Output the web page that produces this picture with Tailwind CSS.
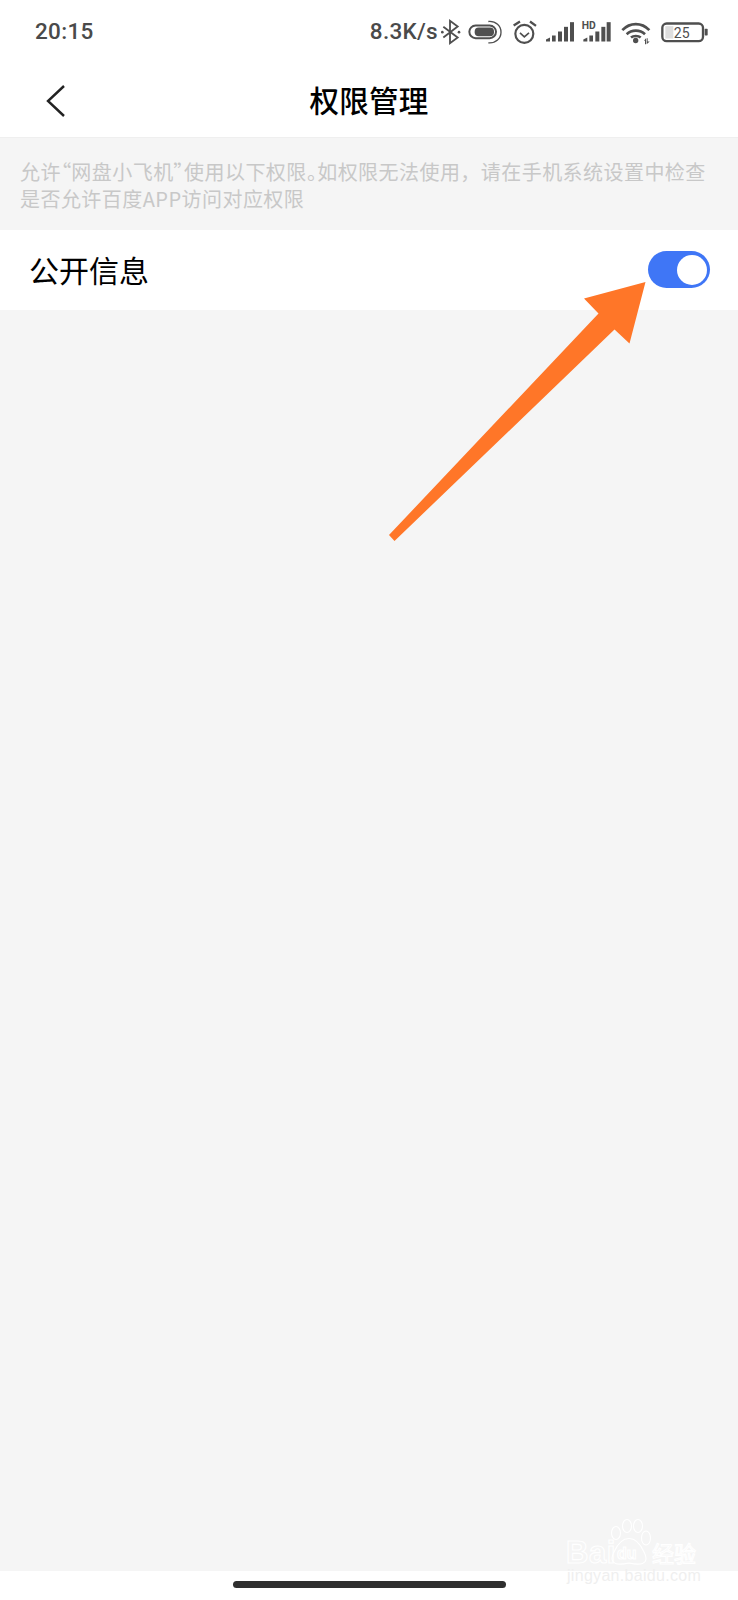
<!DOCTYPE html>
<html lang="zh-CN">
<head>
<meta charset="utf-8">
<script src="https://cdn.jsdelivr.net/npm/@tailwindcss/browser@4"></script>
</head>
<body class="m-0">
<div class="relative w-[738px] h-[1600px] flex flex-col bg-[#f5f5f5] overflow-hidden font-['Noto_Sans_CJK_SC','Noto_Sans',sans-serif]">
  <!-- status bar -->
  <div class="h-[62px] shrink-0 bg-white flex items-center justify-between pl-[35px] pr-[28px]">
    <span class="font-['Roboto',sans-serif] font-medium text-[22.5px] leading-none text-[#4a4a4a] tracking-[0.3px]">20:15</span>
    <div class="flex items-center gap-[2px]">
      <span class="font-['Roboto',sans-serif] font-medium text-[22.5px] leading-none text-[#4a4a4a] tracking-[0.3px]">8.3K/s</span>
      <svg class="w-[270px] h-[27px] block" viewBox="240 50 810 80" fill="none" stroke="#4f4f4f" stroke-width="6">
        <path d="M250 76 L293 108 L270 125 V58 L293 75 L250 108" stroke-width="5.5"/>
        <circle cx="247" cy="92" r="4" fill="#4f4f4f" stroke="none"/><circle cx="297" cy="92" r="4" fill="#4f4f4f" stroke="none"/>
        <rect x="328" y="72" width="80" height="38" rx="19"/>
        <rect x="344" y="78" width="58" height="26" rx="12" fill="#4f4f4f" stroke="none"/>
        <path d="M385 60 C408 58 423 74 423 92 C423 110 408 126 385 124" stroke-width="4"/>
        <circle cx="493" cy="97" r="27" stroke-width="6.5"/>
        <path d="M480 94 L493 106 L507 94" stroke-width="5"/>
        <path d="M461 72 L480 60 M510 60 L528 73" stroke-width="7"/>
        <g fill="#4f4f4f" stroke="none">
          <path d="M558 120 V114 L570 108 V120 Z"/>
          <rect x="576" y="102" width="11" height="18"/><rect x="594" y="90" width="12" height="30"/><rect x="612" y="76" width="12" height="44"/><rect x="630" y="62" width="12" height="58"/>
          <path d="M670 120 V114 L682 108 V120 Z"/>
          <rect x="688" y="102" width="11" height="18"/><rect x="706" y="90" width="12" height="30"/><rect x="724" y="76" width="12" height="44"/><rect x="740" y="62" width="12" height="58"/>
          <text x="665" y="81" font-family="Roboto, sans-serif" font-weight="700" font-size="31">HD</text>
          <circle cx="827" cy="117" r="8"/>
          <path d="M852 118 L858 110 V128 H855 V118 Z M860 110 H863 V120 L869 120 L860 128 Z"/>
        </g>
        <g stroke-width="8">
          <path d="M787 86 C810 62 845 62 868 86"/>
          <path d="M800 98 C815 84 840 84 855 98"/>
          <path d="M813 108 C820 102 835 102 842 108"/>
        </g>
        <rect x="907" y="66" width="122" height="53" rx="13" stroke-width="7"/>
        <rect x="916" y="74" width="24" height="37" fill="#dedede" stroke="none"/>
        <text x="941" y="109" font-family="Roboto, sans-serif" font-size="42" fill="#4f4f4f" stroke="none" letter-spacing="1">25</text>
        <rect x="1034" y="82" width="9" height="20" rx="2" fill="#4f4f4f" stroke="none"/>
      </svg>
    </div>
  </div>
  <!-- nav -->
  <div class="relative h-[75px] shrink-0 bg-white flex items-center justify-center">
    <svg class="absolute left-[45px] top-[22px] w-[22px] h-[34px]" viewBox="0 0 22 34" fill="none" stroke="#222" stroke-width="2.4"><path d="M19 2 L3 17 L19 32"/></svg>
    <span class="text-[29.5px] leading-none font-medium text-black tracking-[0.3px]">权限管理</span>
  </div>
  <!-- hint -->
  <div class="h-[93px] shrink-0 border-t border-[#efefef] pl-[20px] pt-[20px] text-[20px] leading-[27px] text-[#c8c8c8] tracking-[0.45px] whitespace-nowrap">允许<span class="[font-feature-settings:'palt']">“</span>网盘小飞机<span class="[font-feature-settings:'palt']">”</span>使用以下权限<span class="[font-feature-settings:'palt']">。</span>如权限无法使用，请在手机系统设置中检查<br>是否允许百度APP访问对应权限</div>
  <!-- row -->
  <div class="h-[80px] shrink-0 bg-white flex items-center justify-between pl-[29px] pr-[28px] pb-[1px]">
    <span class="text-[30px] leading-none text-black pb-[2px]">公开信息</span>
    <div class="w-[62px] h-[37px] rounded-full bg-[#3f76f6] flex items-center justify-end pr-[3px]">
      <div class="w-[30px] h-[30px] rounded-full bg-white"></div>
    </div>
  </div>
  <div class="flex-1"></div>
  <!-- gesture bar -->
  <div class="h-[29px] shrink-0 bg-white flex justify-center pt-[10px]">
    <div class="w-[273px] h-[7px] rounded-full bg-[#2f2f2f]"></div>
  </div>
  <!-- annotation arrow -->
  <svg class="absolute left-0 top-0 w-[738px] h-[600px] pointer-events-none" viewBox="0 0 738 600">
    <polygon fill="#ff7628" points="645.5,282 584,298.5 598.5,313.5 389,535 394.5,541 614.5,329.5 629.5,343.5"/>
  </svg>
  <!-- watermark -->
  <svg class="absolute left-[560px] top-[1515px] w-[150px] h-[75px]" viewBox="560 1515 150 75" fill="none">
    <g stroke="#ffffff" stroke-width="1.1">
      <text x="566" y="1563" font-family="Liberation Sans, sans-serif" font-weight="700" font-size="31" letter-spacing="0.5">Bai</text>
      <ellipse cx="616" cy="1533" rx="4.5" ry="6.5"/><ellipse cx="627" cy="1526" rx="4.5" ry="6.5"/><ellipse cx="638" cy="1526" rx="4.5" ry="6.5"/>
      <ellipse cx="646" cy="1538" rx="4.5" ry="7"/>
      <path d="M614 1552 C622 1534 636 1534 644 1552 C651 1566 638 1565 629 1563 C620 1565 607 1566 614 1552 Z"/>
      <text x="617" y="1559" font-family="Liberation Sans, sans-serif" font-weight="700" font-size="16">du</text>
      <text x="652" y="1562" font-family="'Noto Sans CJK SC', sans-serif" font-size="22">经验</text>
    </g>
    <text x="567" y="1581" font-family="Liberation Sans, sans-serif" font-size="16" fill="#efefef" letter-spacing="0.3">jingyan.baidu.com</text>
  </svg>
</div>
</body>
</html>
